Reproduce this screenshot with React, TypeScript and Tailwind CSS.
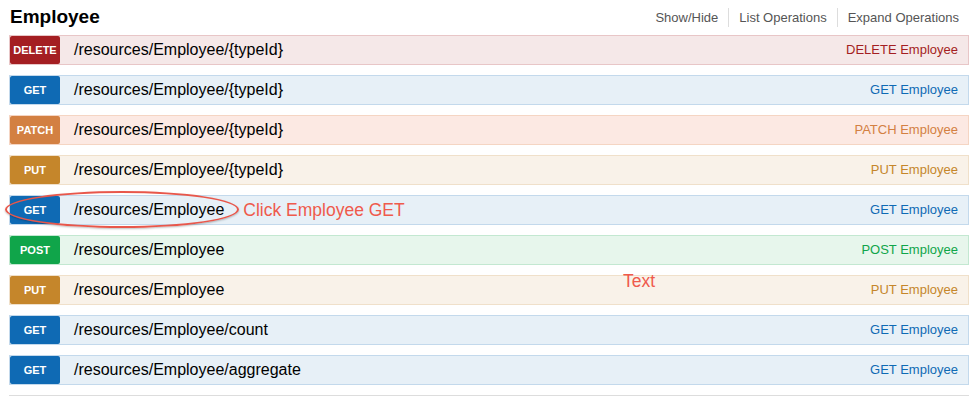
const ops = [
  { m: "DELETE", path: "/resources/Employee/{typeId}", row: "bg-[#f5e8e8] border-[#e8c6c7]", badge: "bg-[#a41e22]", txt: "text-[#a41e22]" },
  { m: "GET", path: "/resources/Employee/{typeId}", row: "bg-[#e7f0f7] border-[#c3d9ec]", badge: "bg-[#0f6ab4]", txt: "text-[#0f6ab4]" },
  { m: "PATCH", path: "/resources/Employee/{typeId}", row: "bg-[#fce9e3] border-[#f5d5c3]", badge: "bg-[#d38042]", txt: "text-[#d38042]" },
  { m: "PUT", path: "/resources/Employee/{typeId}", row: "bg-[#f9f2e9] border-[#f0e0ca]", badge: "bg-[#c5862b]", txt: "text-[#c5862b]" },
  { m: "GET", path: "/resources/Employee", row: "bg-[#e7f0f7] border-[#c3d9ec]", badge: "bg-[#0f6ab4]", txt: "text-[#0f6ab4]", mark: true },
  { m: "POST", path: "/resources/Employee", row: "bg-[#e7f6ec] border-[#c3e8d1]", badge: "bg-[#10a54a]", txt: "text-[#10a54a]" },
  { m: "PUT", path: "/resources/Employee", row: "bg-[#f9f2e9] border-[#f0e0ca]", badge: "bg-[#c5862b]", txt: "text-[#c5862b]", note: true },
  { m: "GET", path: "/resources/Employee/count", row: "bg-[#e7f0f7] border-[#c3d9ec]", badge: "bg-[#0f6ab4]", txt: "text-[#0f6ab4]" },
  { m: "GET", path: "/resources/Employee/aggregate", row: "bg-[#e7f0f7] border-[#c3d9ec]", badge: "bg-[#0f6ab4]", txt: "text-[#0f6ab4]" },
];

const App = () => {
  return (
    <div className="w-[980px] h-[402px] bg-white overflow-hidden font-['Liberation_Sans',Arial,sans-serif]">
      <div className="ml-[9px] w-[960px]">
        <div className="flex items-center justify-between h-[35px] pb-[1px]">
          <h2 className="pl-[1px] text-[19px] font-bold text-black">Employee</h2>
          <ul className="flex items-center text-[13px] text-[#555] pr-[10px]">
            <li className="pr-[10px] border-r border-[#ddd] leading-[19px]">Show/Hide</li>
            <li className="px-[10px] border-r border-[#ddd] leading-[19px]">List Operations</li>
            <li className="pl-[10px] leading-[19px]">Expand Operations</li>
          </ul>
        </div>
        <div className="flex flex-col gap-[10px]">
          {ops.map((o, i) => (
            <div key={i} className={`relative flex items-center h-[30px] border ${o.row}`}>
              <span className={`w-[50px] h-[28px] rounded-[2px] flex items-center justify-center text-white text-[11px] font-bold pt-[1px] ${o.badge}`}>
                {o.m}
              </span>
              <span className="pl-[14px] text-[16px] text-black">{o.path}</span>
              {o.mark && (
                <>
                  <span className="ml-[19px] text-[17.5px] text-[#ef5a4c]">Click Employee GET</span>
                  <div className="absolute left-[-5px] top-[-5px] w-[234px] h-[37px] rounded-[50%] border-[2.5px] border-[#e8574b] shadow-[0_1px_2px_rgba(0,0,0,0.25)]" />
                </>
              )}
              {o.note && (
                <span className="absolute left-[613px] top-[-8px] text-[17.5px] text-[#ef5a4c]">Text</span>
              )}
              <span className={`ml-auto pr-[10px] text-[13px] ${o.txt}`}>
                {o.m} Employee
              </span>
            </div>
          ))}
        </div>
        <div className="mt-[10px] border-t border-[#ddd]" />
      </div>
    </div>
  );
};

export default App;
